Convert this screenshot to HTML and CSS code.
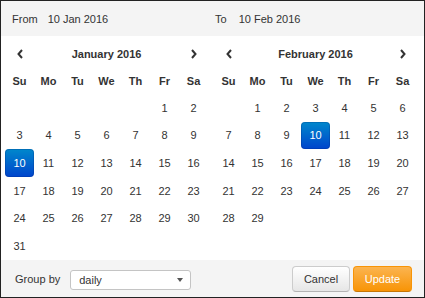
FILE: index.html
```html
<!DOCTYPE html>
<html lang="en">

<head>
    <meta charset="UTF-8">
    <meta name="viewport" content="width=device-width, initial-scale=1.0">
    <title>Date range</title>
    <link rel="stylesheet" href="styles.css">
</head>

<body>
    <div class="picker">
        <div class="range">
            <div class="field field-from"><span class="label">From</span><span>10 Jan 2016</span></div>
            <div class="field field-to"><span class="label">To</span><span>10 Feb 2016</span></div>
        </div>

        <div class="calendars">
            <table class="month">
                <colgroup>
                    <col><col><col><col><col><col><col>
                </colgroup>
                <thead>
                    <tr class="nav">
                        <th><svg class="arrow" width="6" height="10" viewBox="0 0 6 10"><polyline points="5,1 1.5,5 5,9" /></svg></th>
                        <th colspan="5">January 2016</th>
                        <th><svg class="arrow" width="6" height="10" viewBox="0 0 6 10"><polyline points="1,1 4.5,5 1,9" /></svg></th>
                    </tr>
                    <tr>
                        <th>Su</th><th>Mo</th><th>Tu</th><th>We</th><th>Th</th><th>Fr</th><th>Sa</th>
                    </tr>
                </thead>
                <tbody>
                    <tr><td></td><td></td><td></td><td></td><td></td><td>1</td><td>2</td></tr>
                    <tr><td>3</td><td>4</td><td>5</td><td>6</td><td>7</td><td>8</td><td>9</td></tr>
                    <tr><td class="active">10</td><td>11</td><td>12</td><td>13</td><td>14</td><td>15</td><td>16</td></tr>
                    <tr><td>17</td><td>18</td><td>19</td><td>20</td><td>21</td><td>22</td><td>23</td></tr>
                    <tr><td>24</td><td>25</td><td>26</td><td>27</td><td>28</td><td>29</td><td>30</td></tr>
                    <tr><td>31</td><td></td><td></td><td></td><td></td><td></td><td></td></tr>
                </tbody>
            </table>

            <table class="month">
                <colgroup>
                    <col><col><col><col><col><col><col>
                </colgroup>
                <thead>
                    <tr class="nav">
                        <th><svg class="arrow" width="6" height="10" viewBox="0 0 6 10"><polyline points="5,1 1.5,5 5,9" /></svg></th>
                        <th colspan="5">February 2016</th>
                        <th><svg class="arrow" width="6" height="10" viewBox="0 0 6 10"><polyline points="1,1 4.5,5 1,9" /></svg></th>
                    </tr>
                    <tr>
                        <th>Su</th><th>Mo</th><th>Tu</th><th>We</th><th>Th</th><th>Fr</th><th>Sa</th>
                    </tr>
                </thead>
                <tbody>
                    <tr><td></td><td>1</td><td>2</td><td>3</td><td>4</td><td>5</td><td>6</td></tr>
                    <tr><td>7</td><td>8</td><td>9</td><td class="active">10</td><td>11</td><td>12</td><td>13</td></tr>
                    <tr><td>14</td><td>15</td><td>16</td><td>17</td><td>18</td><td>19</td><td>20</td></tr>
                    <tr><td>21</td><td>22</td><td>23</td><td>24</td><td>25</td><td>26</td><td>27</td></tr>
                    <tr><td>28</td><td>29</td><td></td><td></td><td></td><td></td><td></td></tr>
                    <tr><td></td><td></td><td></td><td></td><td></td><td></td><td></td></tr>
                </tbody>
            </table>
        </div>

        <div class="footer">
            <span class="label">Group by</span>
            <div class="select">
                <select>
                    <option>daily</option>
                    <option>weekly</option>
                    <option>monthly</option>
                </select>
            </div>
            <div class="buttons">
                <button class="btn">Cancel</button>
                <button class="btn btn-update">Update</button>
            </div>
        </div>
    </div>
</body>

</html>
```

FILE: styles.css
```css
* {
    margin: 0;
    padding: 0;
    box-sizing: border-box;
}

body {
    font-family: "Liberation Sans", Arial, sans-serif;
    font-size: 11px;
    color: #333;
    background: #fff;
}

.picker {
    width: 425px;
    height: 298px;
    border: 1px solid #222;
    display: flex;
    flex-direction: column;
}

.range {
    height: 35px;
    background: #f4f4f4;
    display: flex;
    align-items: center;
}

.field {
    display: flex;
}

.field-from {
    width: 214px;
    padding-left: 11px;
}

.field .label {
    margin-right: 10px;
}

.field-to .label {
    margin-right: 12px;
}

.calendars {
    display: flex;
    gap: 6px;
    padding: 4px 0 0 4px;
    flex: 1;
}

.month {
    border-collapse: separate;
    border-spacing: 0;
    table-layout: fixed;
    width: 203px;
}

.month col {
    width: 29px;
}

.month th,
.month td {
    height: 27px;
    text-align: center;
    vertical-align: middle;
    font-weight: normal;
    white-space: nowrap;
}

.month th {
    font-weight: bold;
}

.arrow {
    display: block;
    margin: 0 auto;
}

.arrow polyline {
    fill: none;
    stroke: #333;
    stroke-width: 2;
}

.month td.active {
    color: #fff;
    border-radius: 4px;
    background: linear-gradient(to bottom, #0088cc, #0044cc);
    box-shadow: inset 0 0 0 1px rgba(0, 40, 120, 0.25);
}

.footer {
    height: 37px;
    background: #f4f4f4;
    display: flex;
    align-items: center;
    padding: 0 12px 0 14px;
}

.footer .label {
    margin-right: 10px;
}

.select {
    position: relative;
    width: 121px;
    height: 20px;
    margin-top: 2px;
}

.select select {
    appearance: none;
    -webkit-appearance: none;
    width: 100%;
    height: 100%;
    border: 1px solid #c4c4c4;
    border-radius: 3px;
    background: #fff;
    font-family: inherit;
    font-size: 11px;
    color: #333;
    padding-left: 8px;
}

.select::after {
    content: "";
    position: absolute;
    right: 8px;
    top: 8px;
    border-left: 3px solid transparent;
    border-right: 3px solid transparent;
    border-top: 4px solid #555;
}

.buttons {
    margin-left: auto;
    display: flex;
    gap: 3px;
}

.btn {
    height: 26px;
    width: 58px;
    font-family: inherit;
    font-size: 11px;
    color: #333;
    border: 1px solid #ccc;
    border-bottom-color: #b3b3b3;
    border-radius: 4px;
    background: linear-gradient(to bottom, #fff, #e6e6e6);
}

.btn-update {
    width: 59px;
    color: #fff;
    border-color: #f89406;
    border-bottom-color: #c67605;
    background: linear-gradient(to bottom, #fbb450, #f89406);
}
```
